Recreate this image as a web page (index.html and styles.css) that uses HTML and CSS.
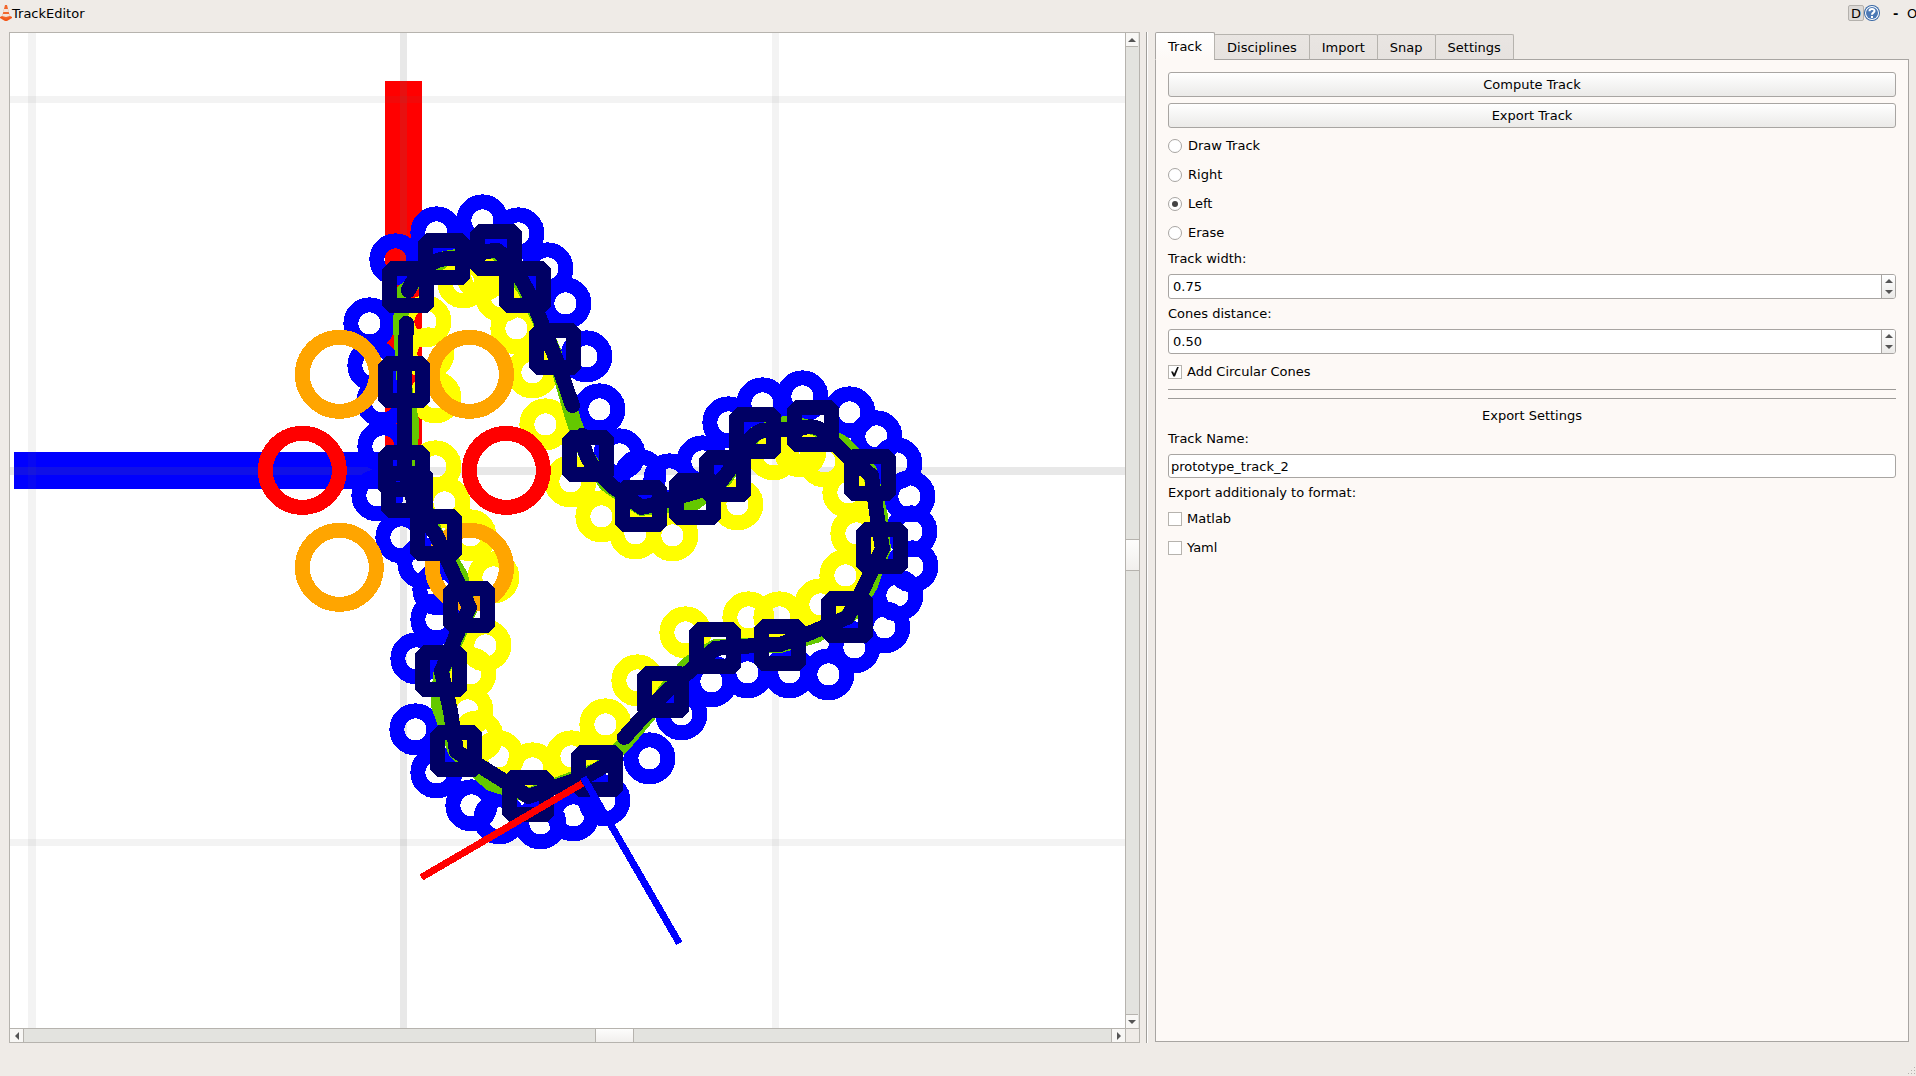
FILE: index.html
```html
<!DOCTYPE html>
<html lang="en">
<head>
<meta charset="utf-8">
<title>TrackEditor</title>
<link rel="stylesheet" href="styles.css">
</head>
<body>
<header class="titlebar">
  <svg class="cone" viewBox="0 0 12 16" aria-hidden="true">
    <path d="M0 12 2 11H10L12 12V13L7 16H5L0 13Z" fill="#f4581a"/>
    <path d="M5 0H7L10 12 6 14 2 12Z" fill="#f2672c"/>
    <path d="M4 4H8L9 7H3ZM3 9H9L10 11 6 12 2 11Z" fill="#f3e3da"/>
  </svg>
  <h1 class="title">TrackEditor</h1>
  <button class="dock" type="button">D</button>
  <button class="help" type="button" aria-label="Help">
    <svg viewBox="0 0 16 16">
      <circle cx="8" cy="8" r="8" fill="#3465a4"/>
      <circle cx="8" cy="8" r="7" fill="#fff"/>
      <circle cx="8" cy="8" r="6" fill="#4a78b5"/>
      <path d="M5.500 6.200C5.500 3.300 10.500 3.300 10.500 6.100C10.500 7.700 8 7.700 8 9.700" fill="none" stroke="#fff" stroke-width="2"/>
      <rect x="7" y="11" width="2" height="2" fill="#fff"/>
    </svg>
  </button>
  <button class="win minimize" type="button">-</button>
  <button class="win" type="button">O</button>
</header>

<main class="workspace">
  <section class="viewer">
    <svg class="canvas" viewBox="10 33 1115 995" preserveAspectRatio="xMidYMid slice" shape-rendering="crispEdges" role="img" aria-label="Track layout">
      <defs>
        <circle id="c" r="18.500"/>
        <circle id="b" r="37"/>
        <rect id="s" x="-18.500" y="-18.500" width="37" height="37"/>
      </defs>
      <path d="M403.500 81V470" stroke="#f00" stroke-width="37"/>
      <path d="M14 470.500H404" stroke="#00f" stroke-width="37"/>
      <g fill="#696969">
        <path fill-opacity=".08" d="M28 33h8v995h-8zM772 33h7v995h-7z"/>
        <path fill-opacity=".08" d="M10 96h1115v7H10zM10 839h1115v7H10z"/>
        <path fill-opacity=".153" d="M400 33h7v995h-7z"/>
        <path fill-opacity=".153" d="M10 467h1115v8H10z"/>
      </g>
      <g transform="translate(.4 .4)">
      <g class="ring blue">
        <use href="#c" x="395" y="259"/><use href="#c" x="436" y="232"/><use href="#c" x="482" y="220"/><use href="#c" x="518" y="233"/>
        <use href="#c" x="547" y="268"/><use href="#c" x="565" y="303"/><use href="#c" x="586" y="356"/><use href="#c" x="599" y="409"/>
        <use href="#c" x="369" y="323"/><use href="#c" x="373" y="365"/><use href="#c" x="382" y="401"/><use href="#c" x="383" y="446"/>
        <use href="#c" x="377" y="495"/><use href="#c" x="401" y="537"/><use href="#c" x="423" y="563"/><use href="#c" x="438" y="589"/>
        <use href="#c" x="436" y="619"/><use href="#c" x="416" y="658"/><use href="#c" x="415" y="729"/><use href="#c" x="436" y="772"/>
        <use href="#c" x="471" y="805"/><use href="#c" x="499" y="818"/><use href="#c" x="540" y="823"/><use href="#c" x="573" y="815"/>
        <use href="#c" x="604" y="800"/><use href="#c" x="649" y="758"/><use href="#c" x="681" y="714"/><use href="#c" x="711" y="681"/>
        <use href="#c" x="747" y="672"/><use href="#c" x="789" y="672"/><use href="#c" x="828" y="674"/><use href="#c" x="854" y="647"/>
        <use href="#c" x="884" y="627"/><use href="#c" x="897" y="595"/><use href="#c" x="912" y="566"/><use href="#c" x="911" y="531"/>
        <use href="#c" x="909" y="496"/><use href="#c" x="896" y="463"/><use href="#c" x="876" y="436"/><use href="#c" x="849" y="412"/>
        <use href="#c" x="802" y="396"/><use href="#c" x="762" y="403"/><use href="#c" x="728" y="422"/><use href="#c" x="702" y="461"/>
        <use href="#c" x="669" y="479"/><use href="#c" x="640" y="475"/><use href="#c" x="619" y="454"/>
      </g>
      <g class="ring yellow">
        <use href="#c" x="425" y="321"/><use href="#c" x="463" y="282"/><use href="#c" x="482" y="275"/><use href="#c" x="501" y="296"/>
        <use href="#c" x="516" y="328"/><use href="#c" x="532" y="372"/><use href="#c" x="545" y="424"/><use href="#c" x="428" y="353"/>
        <use href="#c" x="435" y="397"/><use href="#c" x="435" y="466"/><use href="#c" x="444" y="502"/><use href="#c" x="470" y="535"/>
        <use href="#c" x="493" y="577"/><use href="#c" x="485" y="645"/><use href="#c" x="470" y="673"/><use href="#c" x="467" y="710"/>
        <use href="#c" x="477" y="736"/><use href="#c" x="498" y="756"/><use href="#c" x="532" y="768"/><use href="#c" x="571" y="756"/>
        <use href="#c" x="605" y="724"/><use href="#c" x="637" y="680"/><use href="#c" x="685" y="632"/><use href="#c" x="748" y="617"/>
        <use href="#c" x="779" y="617"/><use href="#c" x="820" y="604"/><use href="#c" x="845" y="575"/><use href="#c" x="856" y="533"/>
        <use href="#c" x="848" y="492"/><use href="#c" x="824" y="461"/><use href="#c" x="800" y="451"/><use href="#c" x="773" y="454"/>
        <use href="#c" x="737" y="504"/><use href="#c" x="672" y="535"/><use href="#c" x="635" y="533"/><use href="#c" x="601" y="516"/>
        <use href="#c" x="570" y="481"/>
      </g>
      <path class="line green" d="M402 292 400 325 404 385 411 420 410 470 436 535 460 575 469 610 440 675 438 705 455 751 490 783 528 795 598 769 625 742 648 715 665 690 687 664 715 646 780 645 816 635 853 612 870 585 883 548 880 515 869 470 843 443 813 427 785 423 755 433 725 478 695 502 641 508 606 484 586 455 573 420 553 350 525 290 495 250 445 258 402 292"/>
      <g class="ring orange">
        <use href="#b" x="339" y="374"/><use href="#b" x="469" y="374"/><use href="#b" x="339" y="567"/><use href="#b" x="469" y="567"/>
      </g>
      <g class="ring red"><use href="#b" x="302" y="470"/><use href="#b" x="506" y="470"/></g>
      <g class="line navy">
        <path d="M408 290C420 262 440 256 460 258C475 255 484 250 497 250C512 262 522 280 532 300C540 320 552 350 557 362L572 405"/>
        <path d="M582 435C583 460 596 471 612 486L641 507 650 505 673 498 708 488C724 482 728 470 736 458C748 441 752 433 762 430L800 428C810 425 820 426 825 434L848 457 871 475 877 518 882 548 862 590 847 617 806 634 780 644 740 646 715 648 690 670 663 694 624 737"/>
        <path d="M603 766 584 777 554 787 528 796 490 772 456 751 450 710 441 671 455 637 469 607 455 577 436 535 415 506 404 471V382L406 323"/>
      </g>
      <g class="ring navy square">
        <use href="#s" x="408" y="287"/><use href="#s" x="444" y="259"/><use href="#s" x="496" y="250"/><use href="#s" x="525" y="287"/>
        <use href="#s" x="555" y="349"/><use href="#s" x="404" y="382"/><use href="#s" x="404" y="471"/><use href="#s" x="407" y="492"/>
        <use href="#s" x="436" y="535"/><use href="#s" x="469" y="607"/><use href="#s" x="441" y="671"/><use href="#s" x="456" y="751"/>
        <use href="#s" x="528" y="796"/><use href="#s" x="597" y="771"/><use href="#s" x="663" y="692"/><use href="#s" x="715" y="648"/>
        <use href="#s" x="780" y="645"/><use href="#s" x="847" y="617"/><use href="#s" x="882" y="548"/><use href="#s" x="870" y="475"/>
        <use href="#s" x="813" y="426"/><use href="#s" x="755" y="433"/><use href="#s" x="725" y="476"/><use href="#s" x="695" y="499"/>
        <use href="#s" x="641" y="506"/><use href="#s" x="588" y="456"/>
      </g>
      <path d="M582 783 421 877" stroke="#f00" stroke-width="7"/>
      <path d="M583 777 679 943" stroke="#00f" stroke-width="7"/>
      </g>
    </svg>
    <div class="scroll vertical">
      <button class="step" type="button" aria-label="Scroll up"><svg viewBox="0 0 8 4"><path d="M0 4 4 0 8 4Z"/></svg></button>
      <span class="before"></span><span class="thumb"></span><span class="after"></span>
      <button class="step" type="button" aria-label="Scroll down"><svg viewBox="0 0 8 4"><path d="M0 0 4 4 8 0Z"/></svg></button>
    </div>
    <div class="scroll horizontal">
      <button class="step" type="button" aria-label="Scroll left"><svg viewBox="0 0 4 8"><path d="M4 0 0 4 4 8Z"/></svg></button>
      <span class="before"></span><span class="thumb"></span><span class="after"></span>
      <button class="step" type="button" aria-label="Scroll right"><svg viewBox="0 0 4 8"><path d="M0 0 4 4 0 8Z"/></svg></button>
    </div>
    <span class="corner"></span>
  </section>

  <div class="splitter"></div>

  <section class="panel">
    <nav class="tabs" role="tablist">
      <button class="tab active" type="button" role="tab" aria-selected="true">Track</button>
      <button class="tab" type="button" role="tab">Disciplines</button>
      <button class="tab" type="button" role="tab">Import</button>
      <button class="tab" type="button" role="tab">Snap</button>
      <button class="tab" type="button" role="tab">Settings</button>
    </nav>
    <form class="pane">
      <button class="action" type="button">Compute Track</button>
      <button class="action" type="button">Export Track</button>
      <label class="option radio"><input type="radio" name="mode">Draw Track</label>
      <label class="option radio"><input type="radio" name="mode">Right</label>
      <label class="option radio"><input type="radio" name="mode" checked>Left</label>
      <label class="option radio"><input type="radio" name="mode">Erase</label>
      <label class="field-label" for="width">Track width:</label>
      <div class="spin">
        <input id="width" type="number" step="0.01" value="0.75">
        <span class="spin-buttons">
          <button type="button" aria-label="Increase width"><svg viewBox="0 0 8 4"><path d="M0 4 4 0 8 4Z"/></svg></button>
          <button type="button" aria-label="Decrease width"><svg viewBox="0 0 8 4"><path d="M0 0 4 4 8 0Z"/></svg></button>
        </span>
      </div>
      <label class="field-label" for="distance">Cones distance:</label>
      <div class="spin">
        <input id="distance" type="number" step="0.01" value="0.50">
        <span class="spin-buttons">
          <button type="button" aria-label="Increase distance"><svg viewBox="0 0 8 4"><path d="M0 4 4 0 8 4Z"/></svg></button>
          <button type="button" aria-label="Decrease distance"><svg viewBox="0 0 8 4"><path d="M0 0 4 4 8 0Z"/></svg></button>
        </span>
      </div>
      <label class="option check"><input type="checkbox" checked>Add Circular Cones</label>
      <hr class="rule">
      <hr class="rule">
      <h2 class="caption centered">Export Settings</h2>
      <label class="field-label" for="name">Track Name:</label>
      <input class="text" id="name" type="text" value="prototype_track_2">
      <p class="caption">Export additionaly to format:</p>
      <label class="option check"><input type="checkbox">Matlab</label>
      <label class="option check"><input type="checkbox">Yaml</label>
    </form>
  </section>
</main>

<footer class="statusbar">
  <svg class="grip" viewBox="0 0 9 9" aria-hidden="true"><path d="M7 0h1v1h-1zM4 3h1v1h-1zM7 3h1v1h-1zM1 6h1v1h-1zM4 6h1v1h-1zM7 6h1v1h-1z" fill="#b5b2ae"/></svg>
</footer>
</body>
</html>
```
FILE: styles.css
```css
* {
  box-sizing: border-box;
}

body {
  display: flex;
  flex-direction: column;
  height: 100vh;
  margin: 0;
  overflow: hidden;
  background: #efebe7;
  color: #000;
  font: 13px/16px "DejaVu Sans", sans-serif;
}

button,
input {
  margin: 0;
  padding: 0;
  border: 0;
  background: none;
  color: inherit;
  font: inherit;
}

svg {
  display: block;
}

h1,
h2,
p {
  margin: 0;
  font: inherit;
}

/* Title bar */
.titlebar {
  display: flex;
  flex: none;
  align-items: center;
  height: 32px;
  padding-bottom: 6px;
}

.cone {
  width: 12px;
  height: 16px;
}

.title {
  flex: 1;
  line-height: 18px;
  padding-top: 2px;
}

.dock {
  width: 16px;
  height: 16px;
  border: 1px solid #b4b1ad;
  border-radius: 2px;
  background: #dcd9d6;
  line-height: 16px;
}

.help {
  width: 16px;
  height: 16px;
}

.win {
  flex: none;
  width: 9px;
  padding-top: 2px;
  text-align: left;
}

.minimize {
  width: 14px;
  margin-left: 13px;
  font-weight: bold;
}

/* Work area */
.workspace {
  display: grid;
  flex: 1;
  grid-template-columns: 3fr 15px 2fr;
  min-height: 0;
  padding: 0 7px 0 9px;
}

.viewer {
  display: grid;
  grid-template-rows: minmax(0, 1fr) 14px;
  grid-template-columns: minmax(0, 1fr) 14px;
  min-height: 0;
  border: 1px solid #b6b3ae;
  background: #fff;
}

.canvas {
  width: 100%;
  height: 100%;
}

.ring {
  fill: none;
  stroke-width: 15px;
}

.blue { stroke: #00f; }
.yellow { stroke: #ff0; }
.orange { stroke: #ffa500; }
.red { stroke: #f00; }
.green { stroke: #64c800; }
.navy { stroke: #000064; }

.square {
  stroke-linejoin: bevel;
}

.line {
  fill: none;
  stroke-width: 15px;
  stroke-linecap: round;
  stroke-linejoin: round;
}

/* Scroll bars */
.scroll {
  display: flex;
  background: #e3e3df;
}

.scroll.vertical {
  flex-direction: column;
  border-left: 1px solid #b6b3ae;
}

.scroll.horizontal {
  border-top: 1px solid #b6b3ae;
}

.step {
  display: grid;
  flex: none;
  place-items: center;
  width: 14px;
  height: 13px;
  background: #f8f7f5;
}

.vertical .step {
  width: 12px;
  height: 14px;
}

.vertical .step:first-child { border-bottom: 1px solid #b6b3ae; }
.vertical .step:last-child { border-top: 1px solid #b6b3ae; }
.horizontal .step:first-child { border-right: 1px solid #b6b3ae; }
.horizontal .step:last-child { border-left: 1px solid #b6b3ae; }

.vertical .step svg {
  width: 8px;
  height: 4px;
}

.horizontal .step svg {
  width: 4px;
  height: 8px;
}

.step path,
.spin path {
  fill: #555;
}

.thumb {
  flex: none;
  background: linear-gradient(#fdfdfc, #f1efed);
}

.vertical .before { flex: 492; }
.vertical .after { flex: 443; }
.horizontal .before { flex: 571; }
.horizontal .after { flex: 477; }

.vertical .thumb {
  height: 32px;
  border: solid #b6b3ae;
  border-width: 1px 0;
}

.horizontal .thumb {
  width: 39px;
  border: solid #b6b3ae;
  border-width: 0 1px;
}

.corner {
  border: solid #b6b3ae;
  border-width: 1px 0 0 1px;
  background: #efebe7;
}

.splitter {
  width: 2px;
  margin-left: 6px;
  border-left: 1px solid #a09e9a;
  background: #fff;
}

/* Side panel */
.panel {
  display: flex;
  flex-direction: column;
  min-width: 0;
}

.tabs {
  z-index: 1;
  display: flex;
  align-items: flex-end;
  height: 28px;
  margin-bottom: -1px;
}

.tab {
  height: 26px;
  margin-left: -1px;
  padding: 2px 12px 0;
  border: 1px solid #b6b3ae;
  border-bottom-color: #a8a5a2;
  border-radius: 2px 2px 0 0;
  background: linear-gradient(#e9e5e2, #e6e2df);
}

.tab.active {
  height: 28px;
  margin-left: 0;
  border-color: #a8a5a2;
  border-bottom-color: #fdf9f6;
  background: linear-gradient(#fff, #fdf9f6);
}

.pane {
  display: flex;
  flex: 1;
  flex-direction: column;
  gap: 6px;
  margin-bottom: 1px;
  padding: 12px;
  border: 1px solid #a8a5a2;
  background: #fdf9f6;
}

.action {
  height: 25px;
  border: 1px solid #a8a5a2;
  border-radius: 3px;
  background: linear-gradient(#fff, #ebeae8);
}

.option {
  display: flex;
  align-items: center;
  gap: 5px;
  height: 23px;
}

.radio {
  gap: 6px;
}

.option input {
  display: grid;
  place-items: center;
  width: 14px;
  height: 14px;
  border: 1px solid #b6b3ae;
  background: #fff;
  appearance: none;
}

.option input[type="radio"] {
  border-color: #a8a5a2;
  border-radius: 50%;
}

.option input[type="radio"]:checked::after {
  width: 6px;
  height: 6px;
  border-radius: 50%;
  background: #444;
  content: "";
}

.option input[type="checkbox"]:checked::after {
  width: 8px;
  height: 10px;
  background: #111;
  clip-path: polygon(0 50%, 25% 50%, 38% 72%, 80% 0, 100% 0, 50% 100%, 30% 100%);
  content: "";
}

.field-label {
  height: 18px;
  line-height: 18px;
}

.spin,
.text {
  border: 1px solid #a8a5a2;
  border-radius: 3px;
  background: #fff;
}

.text {
  height: 24px;
  padding: 0 2px;
}

.spin {
  display: flex;
  height: 25px;
  overflow: hidden;
}

.spin input {
  flex: 1;
  min-width: 0;
  padding: 0 4px;
  appearance: textfield;
}

.spin input::-webkit-inner-spin-button {
  appearance: none;
}

.spin-buttons {
  display: grid;
  grid-template-rows: 1fr 1fr;
  width: 14px;
  border-left: 1px solid #a8a5a2;
  background: linear-gradient(#fff, #ebeae8);
}

.spin-buttons button {
  display: grid;
  place-items: center;
}

.spin svg {
  width: 8px;
  height: 4px;
}

.rule {
  width: 100%;
  height: 3px;
  margin: 0;
  border: 0;
  border-top: 1px solid #9d9b98;
}

.caption {
  height: 17px;
  line-height: 18px;
}

.centered {
  text-align: center;
}

.statusbar {
  display: flex;
  flex: none;
  align-items: flex-end;
  justify-content: flex-end;
  height: 33px;
}

.grip {
  width: 9px;
  height: 9px;
}
```
